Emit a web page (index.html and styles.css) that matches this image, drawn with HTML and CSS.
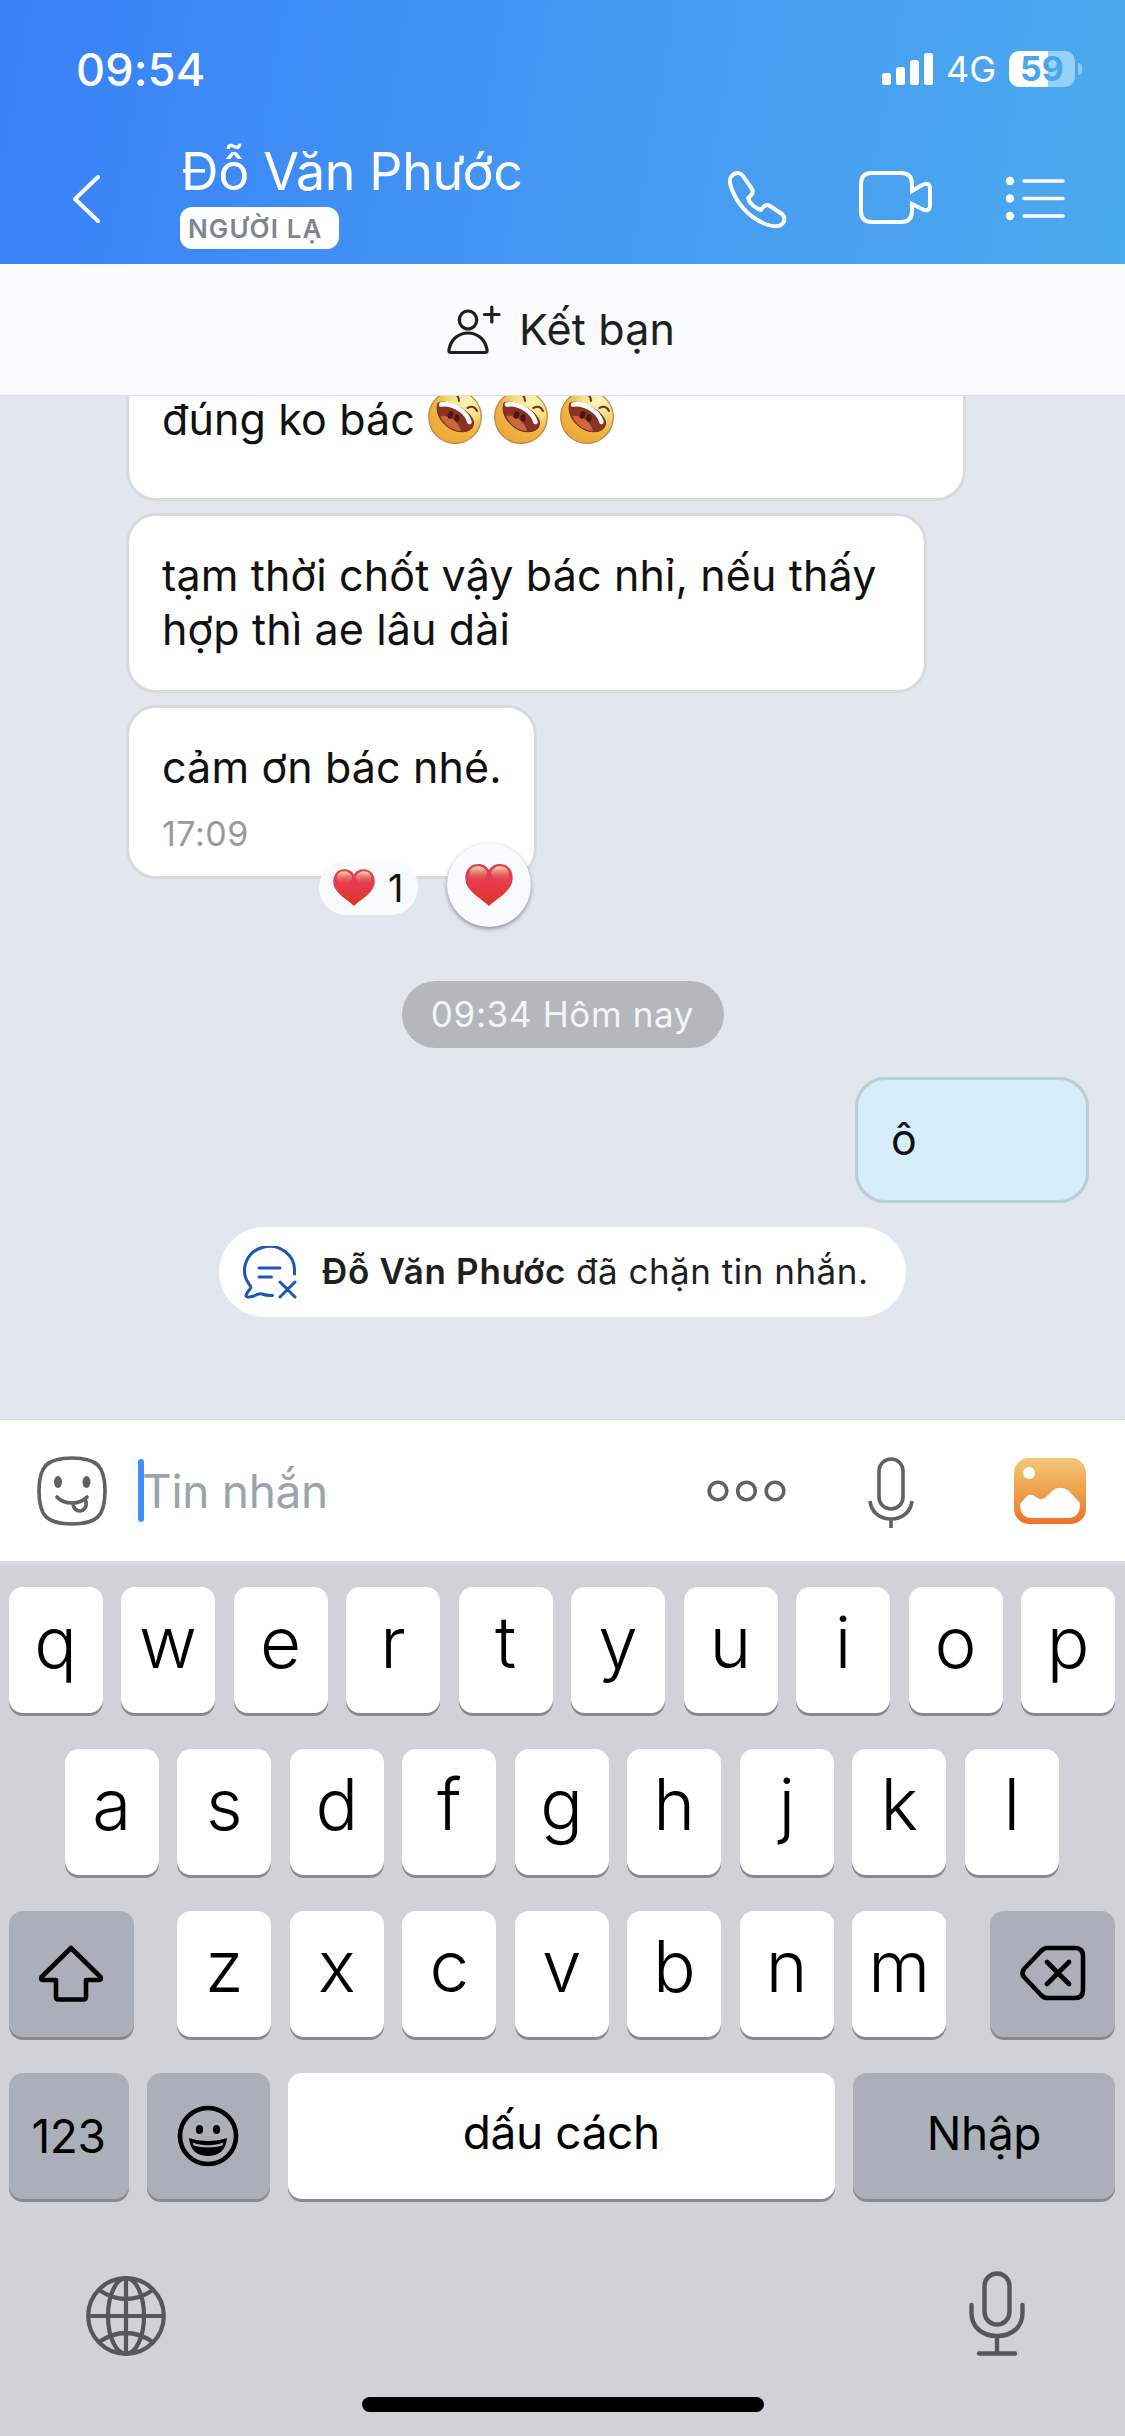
FILE: index.html
```html
<!DOCTYPE html>
<html lang="vi">
<head>
<meta charset="utf-8">
<title>Tin nhắn</title>
<link rel="stylesheet" href="styles.css">
</head>
<body>
<svg width="0" height="0" class="defs">
  <defs>
    <radialGradient id="face" cx=".72" cy=".2" r=".85"><stop offset="0" stop-color="#fbf6bd"/><stop offset=".35" stop-color="#f7e184"/><stop offset=".7" stop-color="#efb43f"/><stop offset="1" stop-color="#eda93a"/></radialGradient>
    <linearGradient id="heart-fill" x1="0" y1="0" x2="0" y2="1"><stop offset="0" stop-color="#d8434a"/><stop offset=".45" stop-color="#e83b4f"/><stop offset="1" stop-color="#da3420"/></linearGradient>
    <linearGradient id="shine" x1="0" y1="0" x2="0" y2="1"><stop offset="0" stop-color="#fbe3b6"/><stop offset="1" stop-color="#e83b4f" stop-opacity="0"/></linearGradient>
    <linearGradient id="photo" x1="0" y1="0" x2="0" y2="1"><stop offset="0" stop-color="#f3c878"/><stop offset=".55" stop-color="#ef9c49"/><stop offset="1" stop-color="#ed712b"/></linearGradient>
    <symbol id="laugh" viewBox="0 0 54 54">
      <circle cx="27" cy="27" r="26.3" fill="url(#face)" stroke="#b9823f" stroke-width="1.2"/>
      <path d="M10 13C20 9 43 20 45.500 32C46 41 37 43 28 41C17 38 6 25 10 13Z" fill="#8a3325" stroke="#6b2a1c" stroke-width="1"/>
      <path d="M12.500 26C19 24 31 31 33 41C24 41 15 34 12.500 26Z" fill="#d0663b"/>
      <g fill="#4a1712"><ellipse cx="22.500" cy="25" rx="2.600" ry="4" transform="rotate(20 22.500 25)"/><ellipse cx="29" cy="28" rx="2.600" ry="3.800"/></g>
      <path d="M13 14.500C23 12.500 38 20 41.500 32" fill="none" stroke="#fff" stroke-width="4.600" stroke-linecap="round"/>
      <path d="M27 4Q31 6 31 11M39.500 18Q46 14.500 49 21" fill="none" stroke="#6d3423" stroke-width="2" stroke-linecap="round"/>
    </symbol>
    <symbol id="heart" viewBox="0 0 48 42">
      <path d="M24 6C20-1 11-1 6 2C-1 7-1 17 3 23C8 31 18 36 24 42C30 36 40 31 45 23C49 17 49 7 42 2C37-1 28-1 24 6Z" fill="url(#heart-fill)"/>
      <path d="M22 8C18 1 10 1 6 5C3 9 4 16 8 18C14 19 21 17 22 8ZM26 8C30 1 38 1 42 5C45 9 44 16 40 18C34 19 27 17 26 8Z" fill="url(#shine)"/>
    </symbol>
  </defs>
</svg>
<div class="phone">
  <header class="top">
    <div class="status">
      <span class="clock">09:54</span>
      <svg class="signal" width="52" height="32" viewBox="0 0 52 32" fill="#fff"><rect y="20" width="9" height="12" rx="2.5"/><rect x="14" y="14" width="9" height="18" rx="2.5"/><rect x="28" y="7" width="9" height="25" rx="2.5"/><rect x="42" width="9" height="32" rx="2.5"/></svg>
      <span class="network">4G</span>
      <span class="battery">59</span><i class="nub"></i>
    </div>
    <div class="titlebar">
      <svg class="back" width="32" height="50" viewBox="0 0 32 50"><path d="M28 3L5 25L28 47" fill="none" stroke="#fff" stroke-width="4" stroke-linecap="round" stroke-linejoin="round"/></svg>
      <div class="person"><div class="name">Đỗ Văn Phước</div><div class="badge">NGƯỜI LẠ</div></div>
      <svg class="tools" width="340" height="60" viewBox="0 0 340 60" fill="none" stroke="#fff" stroke-width="4" stroke-linejoin="round" stroke-linecap="round">
        <path d="M7 5C10 3 14 4 16 7L25 20C27 23 25 26 21 29C22 34 28 39 34 41C37 36 40 35 43 37L55 45C58 48 58 51 56 54C52 60 43 57 36 54C19 46 9 32 4 18C2 12 2 8 7 5Z"/>
        <path d="M145 4H174Q185 4 185 15V22L195 16Q203 12 203 20V36Q203 44 195 40L185 35V42Q185 53 174 53H145Q134 53 134 42V15Q134 4 145 4Z" stroke-linejoin="miter"/>
        <path d="M297 12H336M297 29.500H336M297 47H336" stroke-width="3.5"/>
        <g fill="#fff" stroke="none"><circle cx="283" cy="12" r="4.2"/><circle cx="283" cy="29.500" r="4.2"/><circle cx="283" cy="47" r="4.2"/></g>
      </svg>
    </div>
  </header>
  <div class="friend">
    <svg width="56" height="52" viewBox="0 0 56 52" fill="none" stroke="#1f1f1f" stroke-width="3.2" stroke-linecap="round" stroke-linejoin="round"><ellipse cx="22" cy="17" rx="8.7" ry="9"/><path d="M5 49.500Q2.500 49.500 3 46.500C5 36 13 30 22 30S39 36 41 46.500Q41.500 49.500 39 49.500Z"/><path d="M38.500 11.500H53M45.800 4V19"/></svg>
    <span>Kết bạn</span>
  </div>
  <main class="chat">
    <div class="bubble first"><span>đúng ko bác</span> <svg class="laugh"><use href="#laugh"/></svg><svg class="laugh"><use href="#laugh"/></svg><svg class="laugh"><use href="#laugh"/></svg></div>
    <div class="bubble second">tạm thời chốt vậy bác nhỉ, nếu thấy<br>hợp thì ae lâu dài</div>
    <div class="bubble third">cảm ơn bác nhé.<div class="time">17:09</div>
      <div class="count"><svg width="42" height="37"><use href="#heart"/></svg><span>1</span></div>
      <div class="react"><svg width="48" height="42"><use href="#heart"/></svg></div>
    </div>
    <div class="date">09:34 Hôm nay</div>
    <div class="bubble sent">ô</div>
    <div class="notice">
      <svg width="54" height="54" viewBox="0 0 54 54" fill="none" stroke="#1f55b5" stroke-width="3" stroke-linecap="round" stroke-linejoin="round"><path d="M51.500 28V26A25 24 0 1 0 6 38Q9 41 7 43Q3 48 3 50Q4 52 11 50Q16 47 19 48Q24 50 29.500 49.500M16 22H37M16 31H28.500M37 36L52 51M52 36L37 51"/></svg>
      <span class="who">Đỗ Văn Phước</span><span class="what">đã chặn tin nhắn.</span>
    </div>
  </main>
  <div class="composer">
    <svg class="sticker" width="70" height="70" viewBox="0 0 70 70" fill="none" stroke="#606162" stroke-width="3.6" stroke-linecap="round"><path d="M35 2C60 2 68 10 68 35S60 68 35 68S2 60 2 35S10 2 35 2Z"/><path d="M20 41C27 49 43 49 50 41M36 47C36 58 51 58 49 45"/><g fill="#606162" stroke="none"><ellipse cx="21" cy="26" rx="4" ry="6"/><ellipse cx="49.500" cy="26" rx="4" ry="6"/></g></svg>
    <i class="caret"></i><span class="placeholder">Tin nhắn</span>
    <svg class="more" width="80" height="22" viewBox="0 0 80 22" fill="none" stroke="#606162" stroke-width="3.6"><circle cx="11" cy="11" r="8.8"/><circle cx="39.500" cy="11" r="8.8"/><circle cx="68" cy="11" r="8.8"/></svg>
    <svg class="mic" width="46" height="72" viewBox="0 0 46 72" fill="none" stroke="#606162" stroke-width="3.6"><rect x="11" y="2" width="24" height="50" rx="12"/><path d="M2 44C3 55 12 62 23 62S43 55 44 44M23 62V71"/></svg>
    <svg class="gallery" width="72" height="66" viewBox="0 0 72 66"><rect width="72" height="66" rx="15" fill="url(#photo)"/><circle cx="15" cy="15" r="6" fill="#fff"/><path d="M6 46L13 38Q17 34.500 22 39Q28 44 34 37L39 32Q47 27 55 33L66 45V48Q65 60 54 60H18Q7 60 6 48Z" fill="#fff"/></svg>
  </div>
  <section class="keyboard">
    <div class="row"><b>q</b><b>w</b><b>e</b><b>r</b><b>t</b><b>y</b><b>u</b><b>i</b><b>o</b><b>p</b></div>
    <div class="row"><b>a</b><b>s</b><b>d</b><b>f</b><b>g</b><b>h</b><b>j</b><b>k</b><b>l</b></div>
    <div class="row spread">
      <b class="dark side"><svg width="66" height="58" viewBox="0 0 66 58" fill="none" stroke="#000" stroke-width="4.6" stroke-linejoin="round"><path d="M33 4L62.500 33Q64 36 61 36H48V53Q48 55.500 45.500 55.500H20.500Q18 55.500 18 53V36H5Q2 36 3.500 33Z"/></svg></b>
      <div class="group"><b>z</b><b>x</b><b>c</b><b>v</b><b>b</b><b>n</b><b>m</b></div>
      <b class="dark side"><svg width="66" height="56" viewBox="0 0 66 56" fill="none" stroke="#000" stroke-width="4.600" stroke-linejoin="round" stroke-linecap="round"><path d="M27 3H55Q63 3 63 11V45Q63 53 55 53H27Q24 53 21 50L4 32Q1 28 4 24L21 6Q24 3 27 3ZM27 17L49 39M49 17L27 39"/></svg></b>
    </div>
    <div class="row words">
      <b class="dark num">123</b>
      <b class="dark emoji"><svg width="62" height="62" viewBox="0 0 62 62"><circle cx="31" cy="31" r="28" fill="none" stroke="#000" stroke-width="4.600"/><ellipse cx="22.500" cy="24.500" rx="3.600" ry="4.500"/><ellipse cx="39.500" cy="24.500" rx="3.600" ry="4.500"/><path d="M12 33C23 37 39 37 50 33C49 46 41 51 31 51S13 46 12 33Z"/><path d="M15.500 37.500C25 41 37 41 46.500 37.500L45.500 40.500C38 43 24 43 16.500 40.500Z" fill="#abafba"/></svg></b>
      <b class="space">dấu cách</b>
      <b class="dark enter">Nhập</b>
    </div>
    <div class="bottom">
      <svg width="80" height="80" viewBox="0 0 80 80" fill="none" stroke="#54575c" stroke-width="4.200"><circle cx="40" cy="40" r="37.800"/><ellipse cx="40" cy="40" rx="18" ry="37.800"/><path d="M40 2V78M2 40H78M13 14Q40 32 67 14M13 66Q40 48 67 66"/></svg>
      <svg class="dictate" width="56" height="86" viewBox="0 0 56 86" fill="none" stroke="#54575c" stroke-width="4.400" stroke-linecap="round"><rect x="15.500" y="2.500" width="25" height="51" rx="12.500"/><path d="M2.500 34V42C2.500 56 13 65 28 65S53.500 56 53.500 42V34M28 65V82M10 82.500H46"/></svg>
    </div>
    <div class="home"></div>
  </section>
</div>
</body>
</html>
```
FILE: styles.css
```css
* { box-sizing: border-box; }
body { margin: 0; font-family: Inter, "Noto Sans", sans-serif; color: #111; }
svg { display: block; flex: none; }
.defs { position: absolute; }
.phone { width: 1125px; height: 2436px; overflow: hidden; background: #d1d2d7; display: flex; flex-direction: column; }
.phone > * { flex: none; }

/* header */
.top { height: 264px; background: linear-gradient(100deg, #3880f8, #4498f3 50%, #4caaee); color: #fff; }
.status { height: 138px; padding: 0 43px 0 76px; display: flex; align-items: center; }
.clock { font-size: 45px; font-weight: 550; letter-spacing: .2px; width: 806px; }
.network { font-size: 36px; margin-left: 12px; width: 49px; margin-right: 14px; white-space: nowrap; }
.battery { width: 66px; height: 36px; border-radius: 10px; background: linear-gradient(90deg, #fff 59%, #96d1f6 59%); color: #4aa5ef; font-size: 34px; font-weight: 650; line-height: 36px; text-align: center; }
.nub { width: 4px; height: 12px; margin-left: 3px; background: #8accf5; border-radius: 0 4px 4px 0; }
.titlebar { height: 126px; display: flex; align-items: flex-start; }
.back { margin: 36px 0 0 70px; }
.person { margin-left: 78px; width: 547px; }
.name { font-size: 52px; font-weight: 380; line-height: 67px; height: 69px; letter-spacing: -.4px; padding-left: 1px; white-space: nowrap; }
.badge { width: 159px; height: 42px; border-radius: 12px; background: #fff; color: #7f8591; font-size: 26px; line-height: 43px; font-weight: 600; padding-left: 8px; white-space: nowrap; letter-spacing: 1.1px; }
.tools { margin-top: 31px; }
.friend { height: 132px; background: #f9fafc; border-bottom: 1px solid #dcdde0; display: flex; align-items: center; padding: 0 0 2px 446px; gap: 17px; font-size: 43px; letter-spacing: .2px; color: #1f1f1f; white-space: nowrap; }

/* messages */
.chat { height: 1023px; background: #e1e6ef; display: flex; flex-direction: column; align-items: flex-start; overflow: hidden; }
.bubble { background: #fff; border: 3px solid #d9dadb; border-radius: 30px; margin-left: 126px; padding: 32px 33px 0; font-size: 43px; letter-spacing: .13px; line-height: 54px; white-space: nowrap; }
.first { width: 840px; height: 105px; border-top: 0; border-radius: 0 0 30px 30px; padding-top: 0; display: flex; }
.first span { line-height: 46px; }
.laugh { width: 54px; height: 54px; margin: -6px 12px 0 0; }
.first .laugh:first-of-type { margin-left: 13px; }
.second { width: 801px; height: 180px; margin-top: 12px; }
.third { width: 411px; height: 174px; margin-top: 12px; position: relative; padding-top: 32px; }
.time { font-size: 34px; line-height: 40px; margin-top: 20px; color: #9a9a9a; font-weight: 380; letter-spacing: .5px; }
.count { position: absolute; left: 190px; top: 152px; width: 99px; height: 55px; border-radius: 28px; background: #f9fafc; display: flex; align-items: center; padding-left: 14px; gap: 13px; font-size: 38px; font-weight: 380; }
.react { position: absolute; left: 318px; top: 135px; width: 84px; height: 84px; border-radius: 50%; background: #f9fafc; box-shadow: 0 2px 4px #8c929b; display: flex; align-items: center; justify-content: center; }
.date { align-self: center; margin-top: 102px; width: 322px; height: 67px; border-radius: 34px; background: #b4b8bd; color: #f3f5f8; font-size: 35px; font-weight: 380; letter-spacing: .65px; line-height: 67px; text-align: center; white-space: nowrap; }
.sent { width: 234px; height: 126px; margin: 29px 36px 0; align-self: flex-end; background: #d6eefc; border-color: #b9ced7; }
.notice { align-self: center; margin-top: 24px; width: 687px; height: 90px; border-radius: 45px; background: #fff; display: flex; align-items: center; padding: 0 0 2px 24px; font-size: 35px; color: #1f1f1f; white-space: nowrap; }
.notice svg { margin-top: 4px; }
.who { font-weight: 600; margin-left: 25px; width: 254px; letter-spacing: .7px; }
.what { letter-spacing: .5px; }

/* message field */
.composer { height: 145px; border-top: 1px solid #d8dce2; border-bottom: 3px solid #dcdddf; background: #fff; display: flex; align-items: center; padding-left: 37px; }
.caret { width: 6px; height: 63px; border-radius: 3px; background: #438ff7; margin-left: 31px; }
.placeholder { font-size: 46px; letter-spacing: -.3px; color: #9ca4aa; margin-left: -2px; padding-top: 1px; width: 565px; white-space: nowrap; }
.more { margin-right: 81px; }
.mic { margin-top: 4px; }
.gallery { margin-left: 100px; }

/* keyboard */
.keyboard { height: 872px; background: #d1d2d7; padding: 23px 10px 0 8.5px; display: flex; flex-direction: column; }
.row { height: 126px; margin-bottom: 36px; display: flex; justify-content: center; gap: 18.5px; }
.row b { width: 94px; height: 126px; border-radius: 14px; background: #fff; box-shadow: 0 3px 0 #898a8d; font-size: 71px; font-weight: 360; color: #000; line-height: 110px; text-align: center; white-space: nowrap; flex: none; }
.row .dark { background: #abafba; display: flex; align-items: center; justify-content: center; }
.spread { justify-content: space-between; }
.group { display: flex; gap: 18.5px; }
.row .side { width: 125px; }
.row .side svg { margin-top: -2px; }
.row.words { gap: 0; justify-content: space-between; }
.words b { font-size: 46px; font-weight: 400; letter-spacing: -.4px; line-height: 119px; }
.row .num { width: 120px; }
.row .emoji { width: 123px; }
.row .space { width: 547px; }
.row .enter { width: 262px; }
.words .dark { line-height: normal; }
.row .enter { padding-bottom: 7px; }
.bottom { display: flex; justify-content: space-between; align-items: center; height: 90px; margin-top: 36px; padding: 0 90px 0 77px; }
.dictate { margin-top: -4px; }
.home { width: 402px; height: 15px; border-radius: 8px; background: #000; margin: 36px 0 0 353px; }
```
